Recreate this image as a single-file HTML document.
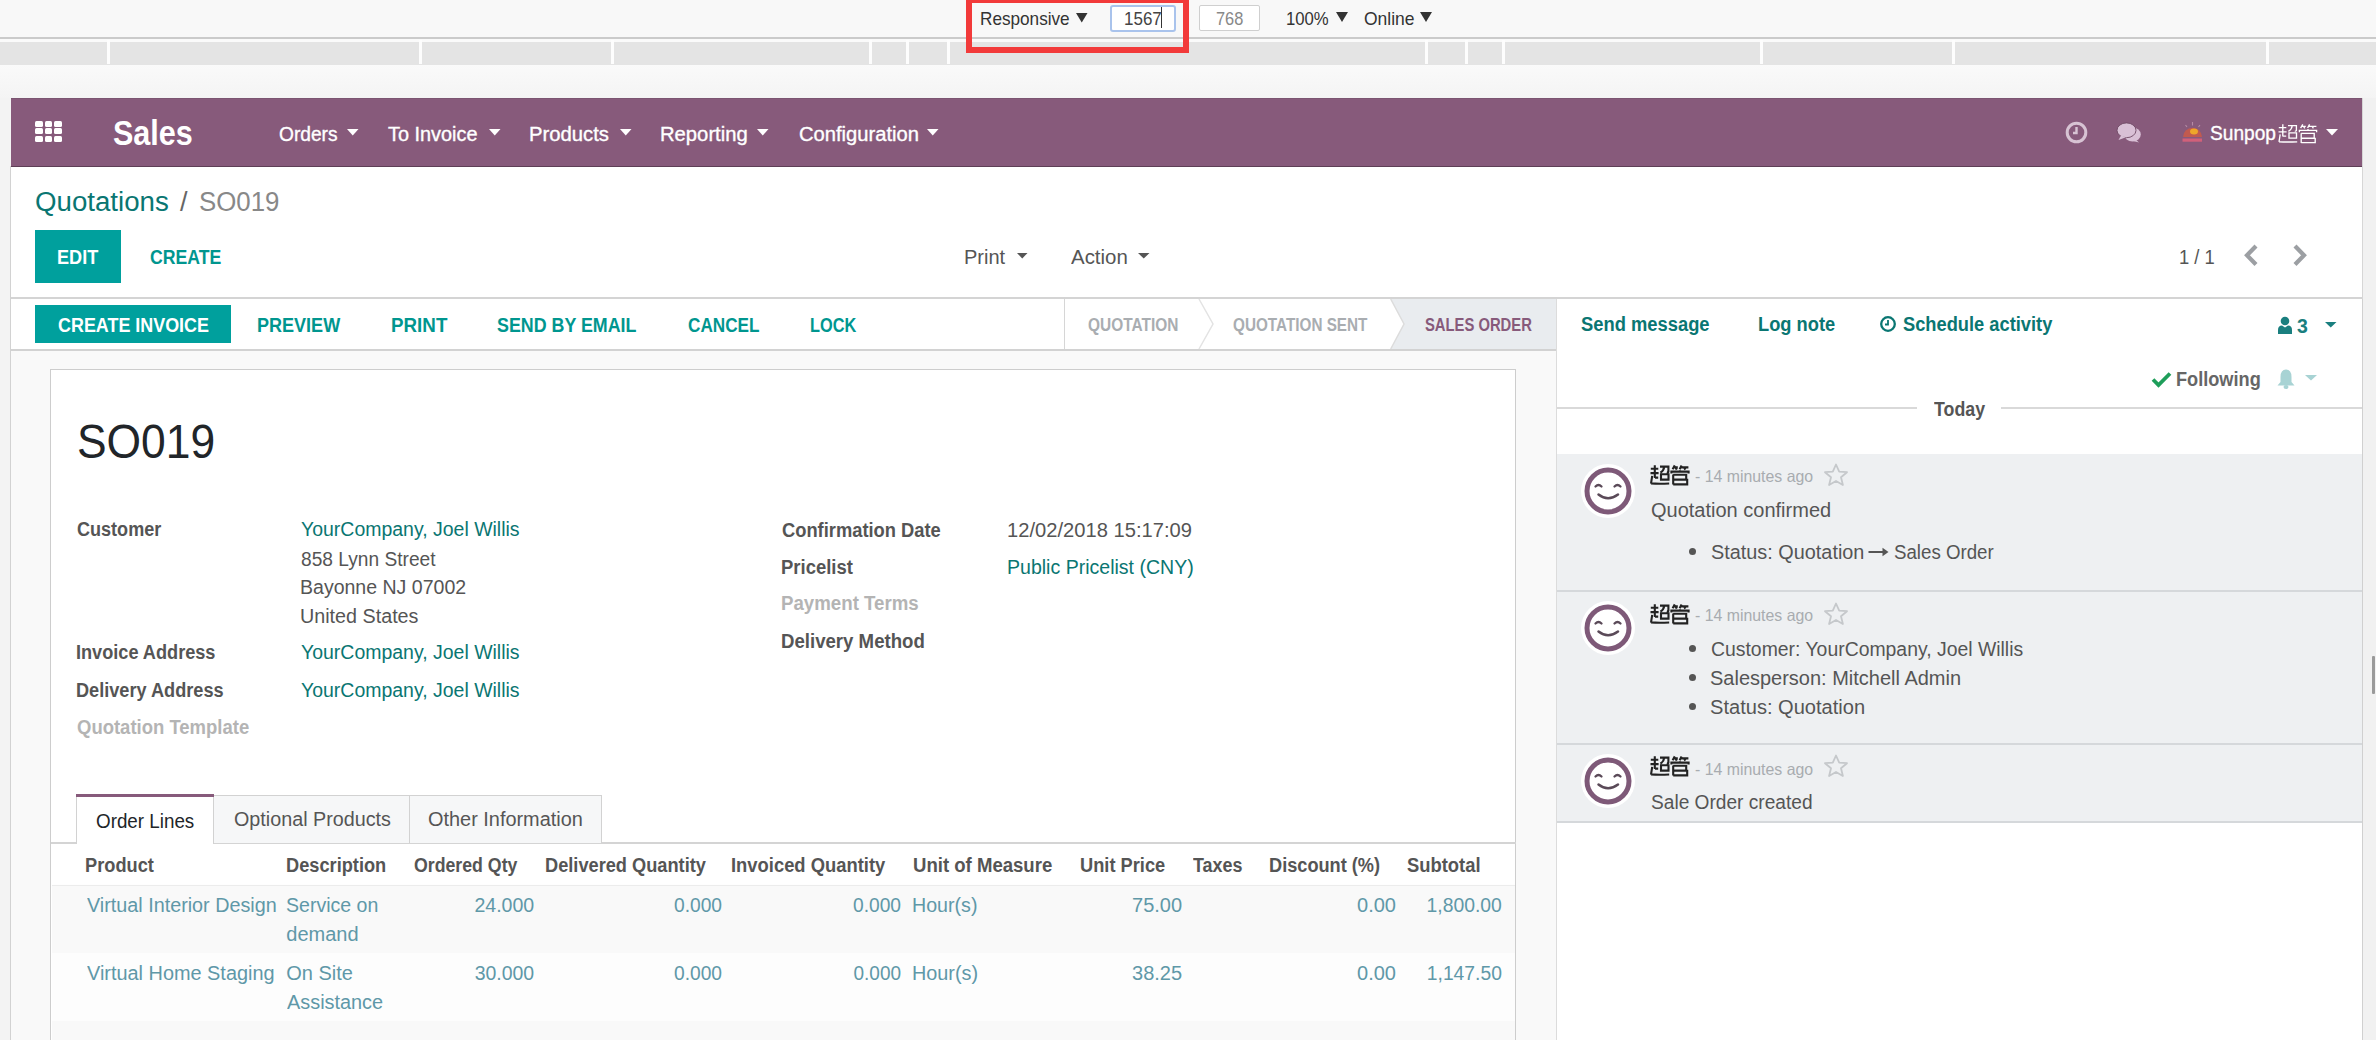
<!DOCTYPE html>
<html><head><meta charset="utf-8"><style>
html,body{margin:0;padding:0;width:2376px;height:1040px;overflow:hidden;background:#fff;}
.a{position:absolute;}
.t{font-family:"Liberation Sans",sans-serif;white-space:pre;}
svg{overflow:visible}
</style></head><body>
<div class="a" style="left:0px;top:0px;width:2376px;height:37px;background:#f8f8f8;"></div>
<div class="a" style="left:0px;top:37px;width:2376px;height:2px;background:#cbcbcb;"></div>
<div class="a" style="left:0px;top:39px;width:2376px;height:3px;background:#fafafa;"></div>
<div class="a" style="left:0px;top:42px;width:2376px;height:23px;background:#e4e4e4;"></div>
<div class="a" style="left:106.5px;top:40px;width:3.0px;height:24px;background:#fdfdfd;"></div>
<div class="a" style="left:418.5px;top:40px;width:3.0px;height:24px;background:#fdfdfd;"></div>
<div class="a" style="left:610.5px;top:40px;width:3.0px;height:24px;background:#fdfdfd;"></div>
<div class="a" style="left:868.5px;top:40px;width:3.0px;height:24px;background:#fdfdfd;"></div>
<div class="a" style="left:905.5px;top:40px;width:3.0px;height:24px;background:#fdfdfd;"></div>
<div class="a" style="left:946.5px;top:40px;width:3.0px;height:24px;background:#fdfdfd;"></div>
<div class="a" style="left:1424.5px;top:40px;width:3.0px;height:24px;background:#fdfdfd;"></div>
<div class="a" style="left:1464.5px;top:40px;width:3.0px;height:24px;background:#fdfdfd;"></div>
<div class="a" style="left:1502.0px;top:40px;width:3.0px;height:24px;background:#fdfdfd;"></div>
<div class="a" style="left:1760.0px;top:40px;width:3.0px;height:24px;background:#fdfdfd;"></div>
<div class="a" style="left:1952.0px;top:40px;width:3.0px;height:24px;background:#fdfdfd;"></div>
<div class="a" style="left:2265.5px;top:40px;width:3.0px;height:24px;background:#fdfdfd;"></div>
<div class="a" style="left:0px;top:65px;width:2376px;height:33px;background:linear-gradient(#fafafa,#f4f4f4);"></div>
<div class="a" style="left:0px;top:98px;width:11px;height:942px;background:#f3f3f3;"></div>
<div class="a" style="left:2362px;top:98px;width:14px;height:942px;background:#f1f1f1;"></div>
<div class="a" style="left:2362px;top:98px;width:1px;height:942px;background:#d6d6d6;"></div>
<div class="a" style="left:2372px;top:656px;width:3px;height:38px;background:#9a9a9a;border-radius:1px"></div>
<div class="a" style="left:11px;top:166px;width:2351px;height:874px;background:#ffffff;"></div>
<div class="a" style="left:10px;top:166px;width:1px;height:874px;background:#d2d2d2;"></div>
<div class="a" style="left:11px;top:98px;width:2351px;height:69px;background:#875a7b;"></div>
<div class="a" style="left:11px;top:98px;width:2351px;height:1px;background:#7b5571;"></div>
<div class="a" style="left:11px;top:165.5px;width:2351px;height:1.5px;background:#5e3f56;"></div>
<div class="a" style="left:11px;top:297px;width:2351px;height:2px;background:#d4d4d4;"></div>
<div class="a" style="left:11px;top:350px;width:1545px;height:690px;background:#f9f9f9;"></div>
<div class="a" style="left:11px;top:349px;width:1545px;height:2px;background:#d2d2d2;"></div>
<div class="a" style="left:50.2px;top:369px;width:1466.3px;height:671px;background:#ffffff;border:1.5px solid #cdcdcd;border-bottom:none;box-sizing:border-box"></div>
<div class="a" style="left:1556px;top:299px;width:806px;height:741px;background:#ffffff;"></div>
<div class="a" style="left:1556px;top:299px;width:1px;height:741px;background:#dcdcdc;"></div>
<div class="a" style="left:34.9px;top:120.6px;width:7.899999999999999px;height:6.200000000000003px;background:#fff;border-radius:1.5px"></div>
<div class="a" style="left:44.6px;top:120.6px;width:7.699999999999996px;height:6.200000000000003px;background:#fff;border-radius:1.5px"></div>
<div class="a" style="left:54.1px;top:120.6px;width:8.100000000000001px;height:6.200000000000003px;background:#fff;border-radius:1.5px"></div>
<div class="a" style="left:34.9px;top:128.1px;width:7.899999999999999px;height:6.400000000000006px;background:#fff;border-radius:1.5px"></div>
<div class="a" style="left:44.6px;top:128.1px;width:7.699999999999996px;height:6.400000000000006px;background:#fff;border-radius:1.5px"></div>
<div class="a" style="left:54.1px;top:128.1px;width:8.100000000000001px;height:6.400000000000006px;background:#fff;border-radius:1.5px"></div>
<div class="a" style="left:34.9px;top:135.8px;width:7.899999999999999px;height:6.399999999999977px;background:#fff;border-radius:1.5px"></div>
<div class="a" style="left:44.6px;top:135.8px;width:7.699999999999996px;height:6.399999999999977px;background:#fff;border-radius:1.5px"></div>
<div class="a" style="left:54.1px;top:135.8px;width:8.100000000000001px;height:6.399999999999977px;background:#fff;border-radius:1.5px"></div>
<svg class="a" style="left:347px;top:129px" width="11.5" height="6.5" viewBox="0 0 11.5 6.5"><polygon points="0,0 11.5,0 5.75,6.5" fill="#fff"/></svg>
<svg class="a" style="left:489px;top:129px" width="11.5" height="6.5" viewBox="0 0 11.5 6.5"><polygon points="0,0 11.5,0 5.75,6.5" fill="#fff"/></svg>
<svg class="a" style="left:619.5px;top:129px" width="11.5" height="6.5" viewBox="0 0 11.5 6.5"><polygon points="0,0 11.5,0 5.75,6.5" fill="#fff"/></svg>
<svg class="a" style="left:756.5px;top:129px" width="11.5" height="6.5" viewBox="0 0 11.5 6.5"><polygon points="0,0 11.5,0 5.75,6.5" fill="#fff"/></svg>
<svg class="a" style="left:927px;top:129px" width="11.5" height="6.5" viewBox="0 0 11.5 6.5"><polygon points="0,0 11.5,0 5.75,6.5" fill="#fff"/></svg>
<svg class="a" style="left:2326px;top:129px" width="12" height="6.5" viewBox="0 0 12 6.5"><polygon points="0,0 12,0 6.0,6.5" fill="#fff"/></svg>
<svg class="a" style="left:2064px;top:120px" width="26" height="26" viewBox="0 0 26 26"><circle cx="12.5" cy="12.5" r="9.3" fill="none" stroke="#d7c3d3" stroke-width="3"/><path d="M12.5 7 V13 H9" fill="none" stroke="#d7c3d3" stroke-width="2.4"/></svg>
<svg class="a" style="left:2110px;top:115px" width="40" height="35" viewBox="0 0 40 35"><ellipse cx="22.5" cy="19.5" rx="8.3" ry="7" fill="#d9c0d6"/><path d="M25 24 L29 27.5 L21 25.5Z" fill="#d9c0d6"/><ellipse cx="16.5" cy="15.3" rx="9.5" ry="7.4" fill="#d9c0d6" stroke="#6e4a64" stroke-width="0.9"/><path d="M11 20.5 L8.5 25 L16 22.3Z" fill="#d9c0d6"/></svg>
<svg class="a" style="left:2180px;top:120px" width="25" height="24" viewBox="0 0 25 24"><path d="M3 17 A9.5 9.2 0 0 1 22 17Z" fill="#c85a4a" opacity="0.9"/><ellipse cx="14" cy="11.5" rx="4" ry="3" fill="#eea62a"/><rect x="2.5" y="18.5" width="19.5" height="3.2" fill="#d9607a" opacity="0.9"/><path d="M12.5 2 V5.5 M5.5 5 L7 7 M20 5 L18.5 7" stroke="#c9a0b8" stroke-width="1.1" opacity="0.7"/></svg>
<svg class="a" style="left:2277.8px;top:123.5px" width="39" height="19.3" viewBox="0 0 39 20" preserveAspectRatio="none"><path d="M0.8 3.7 H8.3 M4.8 0.2 V8.3 M0.5 8.1 H8.6 M4.8 8.3 V13 M5 12.6 H8.2 M2.2 10.8 L1 18.6 M1 18.4 Q8 18.9 19.2 18.5 M10 1.6 H18.4 V6.6 Q18.3 7.6 16.8 7.3 M14.2 1.8 Q13.8 5.6 10.4 7.6 M11 9.2 H18.5 V14.6 H11Z M22.6 4.2 L24.8 0.4 M23.6 2.4 H27.8 M25.6 2.6 L26.8 4.6 M31.6 0.4 L29.6 4.2 M30.6 2.4 H38.4 M34.2 2.6 L35.4 4.6 M21.4 8.6 V6.6 H38.6 V8.6 M30 5.2 V6.6 M23.2 9.6 V19.6 M23.2 9.8 H36.2 V14.6 H23.2 M23.2 14.8 H37.2 V19.4 H23.2" fill="none" stroke="#fff" stroke-width="1.35"/></svg>
<svg class="a" style="left:1016.5px;top:253px" width="10.5" height="5.5" viewBox="0 0 10.5 5.5"><polygon points="0,0 10.5,0 5.25,5.5" fill="#555"/></svg>
<svg class="a" style="left:1137.5px;top:253px" width="11.5" height="5.5" viewBox="0 0 11.5 5.5"><polygon points="0,0 11.5,0 5.75,5.5" fill="#555"/></svg>
<svg class="a" style="left:2240px;top:240px" width="72" height="30" viewBox="0 0 72 30"><path d="M16 6 L7 15.3 L16 24.5" fill="none" stroke="#9c9fa3" stroke-width="4.2"/><path d="M55 6 L64 15.3 L55 24.5" fill="none" stroke="#9c9fa3" stroke-width="4.2"/></svg>
<div class="a" style="left:35px;top:230px;width:86px;height:53px;background:#00a09d;"></div>
<div class="a" style="left:35px;top:305px;width:196px;height:38px;background:#00a09d;"></div>
<div class="a" style="left:1063.5px;top:299px;width:1.0px;height:50px;background:#d6d6d6;"></div>
<svg class="a" style="left:1190px;top:299px" width="366" height="50" viewBox="0 0 366 50"><path d="M200.7 0 L214 25 L200.7 50 H366 V0Z" fill="#e9ecef"/><path d="M9 0 L23 25 L9 50" fill="none" stroke="#e3e3e3" stroke-width="1.5"/><path d="M200.7 0 L214 25 L200.7 50" fill="none" stroke="#dcdcdc" stroke-width="1.5"/></svg>
<div class="a" style="left:1110px;top:5px;width:66px;height:27px;background:#fff;border:2px solid #a9c3ec;border-radius:3px;box-sizing:border-box"></div>
<div class="a" style="left:1161px;top:7px;width:1.2999999999999545px;height:21px;background:#333;"></div>
<div class="a" style="left:1199px;top:5px;width:61px;height:25.5px;background:#fff;border:1.5px solid #cfcfcf;border-radius:2px;box-sizing:border-box"></div>
<svg class="a" style="left:1076px;top:12.5px" width="11.5" height="9.5" viewBox="0 0 11.5 9.5"><polygon points="0,0 11.5,0 5.75,9.5" fill="#333"/></svg>
<svg class="a" style="left:1336px;top:12px" width="12" height="10" viewBox="0 0 12 10"><polygon points="0,0 12,0 6.0,10" fill="#333"/></svg>
<svg class="a" style="left:1420px;top:12px" width="12" height="10" viewBox="0 0 12 10"><polygon points="0,0 12,0 6.0,10" fill="#333"/></svg>
<div class="a" style="left:1183px;top:20px;width:6px;height:8px;background:#555;"></div>
<div class="a" style="left:966px;top:-3px;width:223px;height:55.6px;background:transparent;border:6.2px solid #f23a3a;box-sizing:border-box"></div>
<div class="a" style="left:51px;top:842px;width:1465px;height:1.5px;background:#d4d4d4;"></div>
<div class="a" style="left:213px;top:795px;width:389px;height:48px;background:#f6f7f8;border:1.5px solid #d2d2d2;border-bottom:none;box-sizing:border-box"></div>
<div class="a" style="left:408.5px;top:795px;width:1.5px;height:48px;background:#d2d2d2;"></div>
<div class="a" style="left:76px;top:794px;width:138px;height:49.5px;background:#fff;border-left:1.5px solid #d2d2d2;border-right:1.5px solid #d2d2d2;box-sizing:border-box"></div>
<div class="a" style="left:76px;top:794px;width:138px;height:3px;background:#875a7b;"></div>
<div class="a" style="left:52px;top:884.5px;width:1463px;height:1.5px;background:#ececec;box-shadow:0 1px 3px rgba(0,0,0,0.07)"></div>
<div class="a" style="left:52px;top:886px;width:1463px;height:66.5px;background:#f9f9f9;"></div>
<div class="a" style="left:52px;top:952.5px;width:1463px;height:68.5px;background:#fdfdfd;"></div>
<div class="a" style="left:52px;top:1021px;width:1463px;height:19px;background:#f9f9f9;"></div>
<svg class="a" style="left:1878px;top:314px" width="20" height="20" viewBox="0 0 20 20"><circle cx="10" cy="10" r="6.8" fill="none" stroke="#0a7672" stroke-width="2.3"/><path d="M10 6 V10.5 H7" fill="none" stroke="#0a7672" stroke-width="1.8"/></svg>
<svg class="a" style="left:2277px;top:316px" width="16" height="19" viewBox="0 0 16 19"><circle cx="8" cy="5" r="4.3" fill="#1a7f7f"/><path d="M1 18 V14 Q1 9.5 5 9.5 L8 11.5 L11 9.5 Q15 9.5 15 14 V18Z" fill="#1a7f7f"/></svg>
<svg class="a" style="left:2325px;top:322px" width="11.5" height="5.5" viewBox="0 0 11.5 5.5"><polygon points="0,0 11.5,0 5.75,5.5" fill="#1a7f7f"/></svg>
<svg class="a" style="left:2151px;top:371px" width="21" height="17" viewBox="0 0 21 17"><path d="M2 8.5 L7.5 14 L19 2.5" fill="none" stroke="#1e9e5a" stroke-width="3.8"/></svg>
<svg class="a" style="left:2276px;top:368px" width="20" height="22" viewBox="0 0 20 22"><path d="M10 1.5 Q15.5 1.5 15.5 9 V14 L18.5 17.5 H1.5 L4.5 14 V9 Q4.5 1.5 10 1.5Z" fill="#a8d3d4"/><ellipse cx="10" cy="19" rx="2.5" ry="2" fill="#a8d3d4"/></svg>
<svg class="a" style="left:2305px;top:375px" width="12" height="5.5" viewBox="0 0 12 5.5"><polygon points="0,0 12,0 6.0,5.5" fill="#a8d3d4"/></svg>
<div class="a" style="left:1557px;top:407px;width:360px;height:1.6999999999999886px;background:#d9d9d9;"></div>
<div class="a" style="left:2001px;top:407px;width:361px;height:1.6999999999999886px;background:#d9d9d9;"></div>
<div class="a" style="left:1557px;top:454px;width:805px;height:136px;background:#eef0f2;"></div>
<div class="a" style="left:1557px;top:590px;width:805px;height:2px;background:#d5d8db;"></div>
<div class="a" style="left:1557px;top:592px;width:805px;height:151px;background:#eef0f2;"></div>
<div class="a" style="left:1557px;top:743px;width:805px;height:2px;background:#d5d8db;"></div>
<div class="a" style="left:1557px;top:745px;width:805px;height:76px;background:#eef0f2;"></div>
<div class="a" style="left:1557px;top:821px;width:805px;height:2px;background:#d5d8db;"></div>
<div class="a" style="left:2362px;top:299px;width:1px;height:741px;background:#d0d0d0;"></div>
<svg class="a" style="left:1579.7px;top:462.5px" width="56" height="56" viewBox="0 0 56 56"><circle cx="28" cy="28" r="27" fill="#fff"/><circle cx="28" cy="28" r="21" fill="none" stroke="#7e5978" stroke-width="5"/><path d="M15.5 23.5 Q18.5 20.5 21.5 23.5 M34.5 23.5 Q37.5 20.5 40.5 23.5" fill="none" stroke="#5a4a58" stroke-width="2.3" stroke-linecap="round"/><path d="M18.5 31.5 Q28 39 38 31.5" fill="none" stroke="#5a4a58" stroke-width="2.5" stroke-linecap="round"/></svg>
<svg class="a" style="left:1650px;top:465px" width="39" height="20" viewBox="0 0 39 20" preserveAspectRatio="none"><path d="M0.8 3.7 H8.3 M4.8 0.2 V8.3 M0.5 8.1 H8.6 M4.8 8.3 V13 M5 12.6 H8.2 M2.2 10.8 L1 18.6 M1 18.4 Q8 18.9 19.2 18.5 M10 1.6 H18.4 V6.6 Q18.3 7.6 16.8 7.3 M14.2 1.8 Q13.8 5.6 10.4 7.6 M11 9.2 H18.5 V14.6 H11Z M22.6 4.2 L24.8 0.4 M23.6 2.4 H27.8 M25.6 2.6 L26.8 4.6 M31.6 0.4 L29.6 4.2 M30.6 2.4 H38.4 M34.2 2.6 L35.4 4.6 M21.4 8.6 V6.6 H38.6 V8.6 M30 5.2 V6.6 M23.2 9.6 V19.6 M23.2 9.8 H36.2 V14.6 H23.2 M23.2 14.8 H37.2 V19.4 H23.2" fill="none" stroke="#222" stroke-width="2.1"/></svg>
<svg class="a" style="left:1823px;top:463px" width="26" height="24" viewBox="0 0 26 24"><path d="M13 1.5 L16.2 8.6 L24 9.2 L18 14.3 L19.9 22 L13 17.9 L6.1 22 L8 14.3 L2 9.2 L9.8 8.6Z" fill="none" stroke="#c5c8cb" stroke-width="1.8" stroke-linejoin="round"/></svg>
<svg class="a" style="left:1579.7px;top:600.2px" width="56" height="56" viewBox="0 0 56 56"><circle cx="28" cy="28" r="27" fill="#fff"/><circle cx="28" cy="28" r="21" fill="none" stroke="#7e5978" stroke-width="5"/><path d="M15.5 23.5 Q18.5 20.5 21.5 23.5 M34.5 23.5 Q37.5 20.5 40.5 23.5" fill="none" stroke="#5a4a58" stroke-width="2.3" stroke-linecap="round"/><path d="M18.5 31.5 Q28 39 38 31.5" fill="none" stroke="#5a4a58" stroke-width="2.5" stroke-linecap="round"/></svg>
<svg class="a" style="left:1650px;top:603.5px" width="39" height="20" viewBox="0 0 39 20" preserveAspectRatio="none"><path d="M0.8 3.7 H8.3 M4.8 0.2 V8.3 M0.5 8.1 H8.6 M4.8 8.3 V13 M5 12.6 H8.2 M2.2 10.8 L1 18.6 M1 18.4 Q8 18.9 19.2 18.5 M10 1.6 H18.4 V6.6 Q18.3 7.6 16.8 7.3 M14.2 1.8 Q13.8 5.6 10.4 7.6 M11 9.2 H18.5 V14.6 H11Z M22.6 4.2 L24.8 0.4 M23.6 2.4 H27.8 M25.6 2.6 L26.8 4.6 M31.6 0.4 L29.6 4.2 M30.6 2.4 H38.4 M34.2 2.6 L35.4 4.6 M21.4 8.6 V6.6 H38.6 V8.6 M30 5.2 V6.6 M23.2 9.6 V19.6 M23.2 9.8 H36.2 V14.6 H23.2 M23.2 14.8 H37.2 V19.4 H23.2" fill="none" stroke="#222" stroke-width="2.1"/></svg>
<svg class="a" style="left:1823px;top:601.5px" width="26" height="24" viewBox="0 0 26 24"><path d="M13 1.5 L16.2 8.6 L24 9.2 L18 14.3 L19.9 22 L13 17.9 L6.1 22 L8 14.3 L2 9.2 L9.8 8.6Z" fill="none" stroke="#c5c8cb" stroke-width="1.8" stroke-linejoin="round"/></svg>
<svg class="a" style="left:1579.7px;top:752.5px" width="56" height="56" viewBox="0 0 56 56"><circle cx="28" cy="28" r="27" fill="#fff"/><circle cx="28" cy="28" r="21" fill="none" stroke="#7e5978" stroke-width="5"/><path d="M15.5 23.5 Q18.5 20.5 21.5 23.5 M34.5 23.5 Q37.5 20.5 40.5 23.5" fill="none" stroke="#5a4a58" stroke-width="2.3" stroke-linecap="round"/><path d="M18.5 31.5 Q28 39 38 31.5" fill="none" stroke="#5a4a58" stroke-width="2.5" stroke-linecap="round"/></svg>
<svg class="a" style="left:1650px;top:756px" width="39" height="20" viewBox="0 0 39 20" preserveAspectRatio="none"><path d="M0.8 3.7 H8.3 M4.8 0.2 V8.3 M0.5 8.1 H8.6 M4.8 8.3 V13 M5 12.6 H8.2 M2.2 10.8 L1 18.6 M1 18.4 Q8 18.9 19.2 18.5 M10 1.6 H18.4 V6.6 Q18.3 7.6 16.8 7.3 M14.2 1.8 Q13.8 5.6 10.4 7.6 M11 9.2 H18.5 V14.6 H11Z M22.6 4.2 L24.8 0.4 M23.6 2.4 H27.8 M25.6 2.6 L26.8 4.6 M31.6 0.4 L29.6 4.2 M30.6 2.4 H38.4 M34.2 2.6 L35.4 4.6 M21.4 8.6 V6.6 H38.6 V8.6 M30 5.2 V6.6 M23.2 9.6 V19.6 M23.2 9.8 H36.2 V14.6 H23.2 M23.2 14.8 H37.2 V19.4 H23.2" fill="none" stroke="#222" stroke-width="2.1"/></svg>
<svg class="a" style="left:1823px;top:754px" width="26" height="24" viewBox="0 0 26 24"><path d="M13 1.5 L16.2 8.6 L24 9.2 L18 14.3 L19.9 22 L13 17.9 L6.1 22 L8 14.3 L2 9.2 L9.8 8.6Z" fill="none" stroke="#c5c8cb" stroke-width="1.8" stroke-linejoin="round"/></svg>
<div class="a" style="left:1689px;top:548.3px;width:7px;height:7px;border-radius:50%;background:#555"></div>
<div class="a" style="left:1689px;top:645.1px;width:7px;height:7px;border-radius:50%;background:#555"></div>
<div class="a" style="left:1689px;top:674.3px;width:7px;height:7px;border-radius:50%;background:#555"></div>
<div class="a" style="left:1689px;top:703.2px;width:7px;height:7px;border-radius:50%;background:#555"></div>
<svg class="a" style="left:1868px;top:546px" width="22" height="12" viewBox="0 0 22 12"><path d="M0.5 6 H18" stroke="#555" stroke-width="2"/><path d="M14.5 1.8 L20.5 6 L14.5 10.2Z" fill="#555"/></svg>
<div id="dt_resp" class="a t" style="top:9.64px;font-size:18.5px;line-height:18.5px;font-weight:normal;color:#333;transform:scaleX(0.9273);left:979.50px;transform-origin:0 0">Responsive</div>
<div id="dt_1567" class="a t" style="top:9.64px;font-size:18.5px;line-height:18.5px;font-weight:normal;color:#444;transform:scaleX(0.9190);left:1124.10px;transform-origin:0 0">1567</div>
<div id="dt_768" class="a t" style="top:9.64px;font-size:18.5px;line-height:18.5px;font-weight:normal;color:#888;transform:scaleX(0.8852);left:1216.00px;transform-origin:0 0">768</div>
<div id="dt_100" class="a t" style="top:9.64px;font-size:18.5px;line-height:18.5px;font-weight:normal;color:#333;transform:scaleX(0.9025);left:1286.40px;transform-origin:0 0">100%</div>
<div id="dt_online" class="a t" style="top:9.64px;font-size:18.5px;line-height:18.5px;font-weight:normal;color:#333;transform:scaleX(0.9440);left:1363.50px;transform-origin:0 0">Online</div>
<div id="nv_sales" class="a t" style="top:116.10px;font-size:34.5px;line-height:34.5px;font-weight:bold;color:#fff;transform:scaleX(0.8854);left:112.50px;transform-origin:0 0">Sales</div>
<div id="nv_orders" class="a t" style="top:123.77px;font-size:20px;line-height:20px;font-weight:normal;color:#fff;transform:scaleX(0.9576);-webkit-text-stroke:0.35px #fff;left:279.00px;transform-origin:0 0">Orders</div>
<div id="nv_toinv" class="a t" style="top:123.77px;font-size:20px;line-height:20px;font-weight:normal;color:#fff;transform:scaleX(0.9937);-webkit-text-stroke:0.35px #fff;left:388.40px;transform-origin:0 0">To Invoice</div>
<div id="nv_products" class="a t" style="top:123.77px;font-size:20px;line-height:20px;font-weight:normal;color:#fff;transform:scaleX(1.0131);-webkit-text-stroke:0.35px #fff;left:529.00px;transform-origin:0 0">Products</div>
<div id="nv_reporting" class="a t" style="top:123.77px;font-size:20px;line-height:20px;font-weight:normal;color:#fff;transform:scaleX(1.0118);-webkit-text-stroke:0.35px #fff;left:660.10px;transform-origin:0 0">Reporting</div>
<div id="nv_config" class="a t" style="top:123.77px;font-size:20px;line-height:20px;font-weight:normal;color:#fff;transform:scaleX(1.0085);-webkit-text-stroke:0.35px #fff;left:798.80px;transform-origin:0 0">Configuration</div>
<div id="nv_user" class="a t" style="top:122.87px;font-size:20px;line-height:20px;font-weight:normal;color:#fff;transform:scaleX(0.9565);-webkit-text-stroke:0.35px #fff;left:2210.20px;transform-origin:0 0">Sunpop</div>
<div id="cp_quot" class="a t" style="top:189.44px;font-size:27px;line-height:27px;font-weight:normal;color:#0a7672;transform:scaleX(1.0247);left:34.80px;transform-origin:0 0">Quotations</div>
<div id="cp_slash" class="a t" style="top:189.44px;font-size:27px;line-height:27px;font-weight:normal;color:#666;transform:scaleX(1.0000);left:180.00px;transform-origin:0 0">/</div>
<div id="cp_so" class="a t" style="top:189.44px;font-size:27px;line-height:27px;font-weight:normal;color:#888;transform:scaleX(0.9563);left:199.10px;transform-origin:0 0">SO019</div>
<div id="cp_edit" class="a t" style="top:248.29px;font-size:19.5px;line-height:19.5px;font-weight:bold;color:#fff;transform:scaleX(0.9280);left:57.00px;transform-origin:0 0">EDIT</div>
<div id="cp_create" class="a t" style="top:248.29px;font-size:19.5px;line-height:19.5px;font-weight:bold;color:#00968f;transform:scaleX(0.9065);left:150.00px;transform-origin:0 0">CREATE</div>
<div id="cp_print" class="a t" style="top:247.37px;font-size:20px;line-height:20px;font-weight:normal;color:#555555;transform:scaleX(1.0009);left:964.10px;transform-origin:0 0">Print</div>
<div id="cp_action" class="a t" style="top:247.37px;font-size:20px;line-height:20px;font-weight:normal;color:#555555;transform:scaleX(1.0220);left:1070.90px;transform-origin:0 0">Action</div>
<div id="cp_pager" class="a t" style="top:247.37px;font-size:20px;line-height:20px;font-weight:normal;color:#555555;transform:scaleX(0.9211);left:2178.50px;transform-origin:0 0">1 / 1</div>
<div id="sb_inv" class="a t" style="top:316.29px;font-size:19.5px;line-height:19.5px;font-weight:bold;color:#fff;transform:scaleX(0.9188);left:57.60px;transform-origin:0 0">CREATE INVOICE</div>
<div id="sb_prev" class="a t" style="top:316.29px;font-size:19.5px;line-height:19.5px;font-weight:bold;color:#00968f;transform:scaleX(0.9247);left:257.20px;transform-origin:0 0">PREVIEW</div>
<div id="sb_print" class="a t" style="top:316.29px;font-size:19.5px;line-height:19.5px;font-weight:bold;color:#00968f;transform:scaleX(0.9634);left:390.80px;transform-origin:0 0">PRINT</div>
<div id="sb_send" class="a t" style="top:316.29px;font-size:19.5px;line-height:19.5px;font-weight:bold;color:#00968f;transform:scaleX(0.9150);left:497.00px;transform-origin:0 0">SEND BY EMAIL</div>
<div id="sb_cancel" class="a t" style="top:316.29px;font-size:19.5px;line-height:19.5px;font-weight:bold;color:#00968f;transform:scaleX(0.8792);left:688.10px;transform-origin:0 0">CANCEL</div>
<div id="sb_lock" class="a t" style="top:316.29px;font-size:19.5px;line-height:19.5px;font-weight:bold;color:#00968f;transform:scaleX(0.8367);left:810.00px;transform-origin:0 0">LOCK</div>
<div id="st_quot" class="a t" style="top:316.06px;font-size:18px;line-height:18px;font-weight:bold;color:#a9adb1;transform:scaleX(0.8578);left:1088.10px;transform-origin:0 0">QUOTATION</div>
<div id="st_sent" class="a t" style="top:316.06px;font-size:18px;line-height:18px;font-weight:bold;color:#a9adb1;transform:scaleX(0.8491);left:1233.00px;transform-origin:0 0">QUOTATION SENT</div>
<div id="st_so" class="a t" style="top:316.06px;font-size:18px;line-height:18px;font-weight:bold;color:#875a7b;transform:scaleX(0.8218);left:1424.50px;transform-origin:0 0">SALES ORDER</div>
<div id="sh_title" class="a t" style="top:418.17px;font-size:48px;line-height:48px;font-weight:normal;color:#212529;transform:scaleX(0.9245);left:76.80px;transform-origin:0 0">SO019</div>
<div id="f_cust" class="a t" style="top:519.99px;font-size:19.5px;line-height:19.5px;font-weight:bold;color:#555555;transform:scaleX(0.9255);left:76.60px;transform-origin:0 0">Customer</div>
<div id="f_cust_v" class="a t" style="top:519.07px;font-size:20px;line-height:20px;font-weight:normal;color:#0a7672;transform:scaleX(0.9734);left:301.30px;transform-origin:0 0">YourCompany, Joel Willis</div>
<div id="f_addr1" class="a t" style="top:548.87px;font-size:20px;line-height:20px;font-weight:normal;color:#555555;transform:scaleX(0.9575);left:301.30px;transform-origin:0 0">858 Lynn Street</div>
<div id="f_addr2" class="a t" style="top:577.17px;font-size:20px;line-height:20px;font-weight:normal;color:#555555;transform:scaleX(0.9764);left:300.30px;transform-origin:0 0">Bayonne NJ 07002</div>
<div id="f_addr3" class="a t" style="top:606.07px;font-size:20px;line-height:20px;font-weight:normal;color:#555555;transform:scaleX(0.9866);left:300.30px;transform-origin:0 0">United States</div>
<div id="f_inv" class="a t" style="top:643.39px;font-size:19.5px;line-height:19.5px;font-weight:bold;color:#555555;transform:scaleX(0.9302);left:75.60px;transform-origin:0 0">Invoice Address</div>
<div id="f_inv_v" class="a t" style="top:642.47px;font-size:20px;line-height:20px;font-weight:normal;color:#0a7672;transform:scaleX(0.9734);left:301.30px;transform-origin:0 0">YourCompany, Joel Willis</div>
<div id="f_del" class="a t" style="top:680.79px;font-size:19.5px;line-height:19.5px;font-weight:bold;color:#555555;transform:scaleX(0.9304);left:75.60px;transform-origin:0 0">Delivery Address</div>
<div id="f_del_v" class="a t" style="top:679.87px;font-size:20px;line-height:20px;font-weight:normal;color:#0a7672;transform:scaleX(0.9734);left:301.30px;transform-origin:0 0">YourCompany, Joel Willis</div>
<div id="f_tmpl" class="a t" style="top:717.69px;font-size:19.5px;line-height:19.5px;font-weight:bold;color:#b4b4b4;transform:scaleX(0.9481);left:76.60px;transform-origin:0 0">Quotation Template</div>
<div id="f_conf" class="a t" style="top:520.89px;font-size:19.5px;line-height:19.5px;font-weight:bold;color:#555555;transform:scaleX(0.9397);left:782.40px;transform-origin:0 0">Confirmation Date</div>
<div id="f_conf_v" class="a t" style="top:519.97px;font-size:20px;line-height:20px;font-weight:normal;color:#555555;transform:scaleX(1.0077);left:1007.00px;transform-origin:0 0">12/02/2018 15:17:09</div>
<div id="f_pl" class="a t" style="top:557.59px;font-size:19.5px;line-height:19.5px;font-weight:bold;color:#555555;transform:scaleX(0.9476);left:781.40px;transform-origin:0 0">Pricelist</div>
<div id="f_pl_v" class="a t" style="top:556.67px;font-size:20px;line-height:20px;font-weight:normal;color:#0a7672;transform:scaleX(0.9769);left:1007.00px;transform-origin:0 0">Public Pricelist (CNY)</div>
<div id="f_pt" class="a t" style="top:593.99px;font-size:19.5px;line-height:19.5px;font-weight:bold;color:#b4b4b4;transform:scaleX(0.9577);left:781.40px;transform-origin:0 0">Payment Terms</div>
<div id="f_dm" class="a t" style="top:631.89px;font-size:19.5px;line-height:19.5px;font-weight:bold;color:#555555;transform:scaleX(0.9547);left:781.40px;transform-origin:0 0">Delivery Method</div>
<div id="tab1" class="a t" style="top:810.87px;font-size:20px;line-height:20px;font-weight:normal;color:#212529;transform:scaleX(0.9405);left:95.80px;transform-origin:0 0">Order Lines</div>
<div id="tab2" class="a t" style="top:809.37px;font-size:20px;line-height:20px;font-weight:normal;color:#555;transform:scaleX(0.9874);left:233.60px;transform-origin:0 0">Optional Products</div>
<div id="tab3" class="a t" style="top:809.37px;font-size:20px;line-height:20px;font-weight:normal;color:#555;transform:scaleX(0.9949);left:428.20px;transform-origin:0 0">Other Information</div>
<div id="th_prod" class="a t" style="top:856.49px;font-size:19.5px;line-height:19.5px;font-weight:bold;color:#555555;transform:scaleX(0.9345);left:85.00px;transform-origin:0 0">Product</div>
<div id="th_desc" class="a t" style="top:856.49px;font-size:19.5px;line-height:19.5px;font-weight:bold;color:#555555;transform:scaleX(0.9340);left:286.00px;transform-origin:0 0">Description</div>
<div id="th_oq" class="a t" style="top:856.49px;font-size:19.5px;line-height:19.5px;font-weight:bold;color:#555555;transform:scaleX(0.9089);left:413.70px;transform-origin:0 0">Ordered Qty</div>
<div id="th_dq" class="a t" style="top:856.49px;font-size:19.5px;line-height:19.5px;font-weight:bold;color:#555555;transform:scaleX(0.9338);left:544.60px;transform-origin:0 0">Delivered Quantity</div>
<div id="th_iq" class="a t" style="top:856.49px;font-size:19.5px;line-height:19.5px;font-weight:bold;color:#555555;transform:scaleX(0.9428);left:731.40px;transform-origin:0 0">Invoiced Quantity</div>
<div id="th_uom" class="a t" style="top:856.49px;font-size:19.5px;line-height:19.5px;font-weight:bold;color:#555555;transform:scaleX(0.9521);left:913.00px;transform-origin:0 0">Unit of Measure</div>
<div id="th_up" class="a t" style="top:856.49px;font-size:19.5px;line-height:19.5px;font-weight:bold;color:#555555;transform:scaleX(0.9360);left:1079.90px;transform-origin:0 0">Unit Price</div>
<div id="th_tax" class="a t" style="top:856.49px;font-size:19.5px;line-height:19.5px;font-weight:bold;color:#555555;transform:scaleX(0.9189);left:1193.00px;transform-origin:0 0">Taxes</div>
<div id="th_disc" class="a t" style="top:856.49px;font-size:19.5px;line-height:19.5px;font-weight:bold;color:#555555;transform:scaleX(0.9322);left:1268.70px;transform-origin:0 0">Discount (%)</div>
<div id="th_sub" class="a t" style="top:856.49px;font-size:19.5px;line-height:19.5px;font-weight:bold;color:#555555;transform:scaleX(0.9431);left:1407.00px;transform-origin:0 0">Subtotal</div>
<div id="r1_prod" class="a t" style="top:895.47px;font-size:20px;line-height:20px;font-weight:normal;color:#5f98a8;transform:scaleX(0.9885);left:86.60px;transform-origin:0 0">Virtual Interior Design</div>
<div id="r1_desc1" class="a t" style="top:895.47px;font-size:20px;line-height:20px;font-weight:normal;color:#5f98a8;transform:scaleX(0.9765);left:286.30px;transform-origin:0 0">Service on</div>
<div id="r1_desc2" class="a t" style="top:923.77px;font-size:20px;line-height:20px;font-weight:normal;color:#5f98a8;transform:scaleX(1.0000);left:286.30px;transform-origin:0 0">demand</div>
<div id="r1_oq" class="a t" style="top:895.47px;font-size:20px;line-height:20px;font-weight:normal;color:#5f98a8;transform:scaleX(0.9774);right:1841.60px;transform-origin:100% 0">24.000</div>
<div id="r1_dq" class="a t" style="top:895.47px;font-size:20px;line-height:20px;font-weight:normal;color:#5f98a8;transform:scaleX(0.9600);right:1654.00px;transform-origin:100% 0">0.000</div>
<div id="r1_iq" class="a t" style="top:895.47px;font-size:20px;line-height:20px;font-weight:normal;color:#5f98a8;transform:scaleX(0.9598);right:1475.10px;transform-origin:100% 0">0.000</div>
<div id="r1_uom" class="a t" style="top:895.47px;font-size:20px;line-height:20px;font-weight:normal;color:#5f98a8;transform:scaleX(0.9819);left:911.80px;transform-origin:0 0">Hour(s)</div>
<div id="r1_up" class="a t" style="top:895.47px;font-size:20px;line-height:20px;font-weight:normal;color:#5f98a8;transform:scaleX(1.0000);right:1193.90px;transform-origin:100% 0">75.00</div>
<div id="r1_disc" class="a t" style="top:895.47px;font-size:20px;line-height:20px;font-weight:normal;color:#5f98a8;transform:scaleX(1.0000);right:980.00px;transform-origin:100% 0">0.00</div>
<div id="r1_sub" class="a t" style="top:895.47px;font-size:20px;line-height:20px;font-weight:normal;color:#5f98a8;transform:scaleX(0.9664);right:874.40px;transform-origin:100% 0">1,800.00</div>
<div id="r2_prod" class="a t" style="top:962.77px;font-size:20px;line-height:20px;font-weight:normal;color:#5f98a8;transform:scaleX(0.9943);left:86.60px;transform-origin:0 0">Virtual Home Staging</div>
<div id="r2_desc1" class="a t" style="top:962.77px;font-size:20px;line-height:20px;font-weight:normal;color:#5f98a8;transform:scaleX(1.0000);left:286.30px;transform-origin:0 0">On Site</div>
<div id="r2_desc2" class="a t" style="top:991.67px;font-size:20px;line-height:20px;font-weight:normal;color:#5f98a8;transform:scaleX(0.9939);left:287.30px;transform-origin:0 0">Assistance</div>
<div id="r2_oq" class="a t" style="top:962.77px;font-size:20px;line-height:20px;font-weight:normal;color:#5f98a8;transform:scaleX(0.9724);right:1841.60px;transform-origin:100% 0">30.000</div>
<div id="r2_dq" class="a t" style="top:962.77px;font-size:20px;line-height:20px;font-weight:normal;color:#5f98a8;transform:scaleX(0.9600);right:1654.00px;transform-origin:100% 0">0.000</div>
<div id="r2_iq" class="a t" style="top:962.77px;font-size:20px;line-height:20px;font-weight:normal;color:#5f98a8;transform:scaleX(0.9497);right:1475.10px;transform-origin:100% 0">0.000</div>
<div id="r2_uom" class="a t" style="top:962.77px;font-size:20px;line-height:20px;font-weight:normal;color:#5f98a8;transform:scaleX(0.9911);left:911.80px;transform-origin:0 0">Hour(s)</div>
<div id="r2_up" class="a t" style="top:962.77px;font-size:20px;line-height:20px;font-weight:normal;color:#5f98a8;transform:scaleX(1.0000);right:1193.90px;transform-origin:100% 0">38.25</div>
<div id="r2_disc" class="a t" style="top:962.77px;font-size:20px;line-height:20px;font-weight:normal;color:#5f98a8;transform:scaleX(1.0000);right:980.00px;transform-origin:100% 0">0.00</div>
<div id="r2_sub" class="a t" style="top:962.77px;font-size:20px;line-height:20px;font-weight:normal;color:#5f98a8;transform:scaleX(0.9638);right:874.40px;transform-origin:100% 0">1,147.50</div>
<div id="ch_send" class="a t" style="top:314.99px;font-size:19.5px;line-height:19.5px;font-weight:bold;color:#0a7672;transform:scaleX(0.9413);left:1581.40px;transform-origin:0 0">Send message</div>
<div id="ch_log" class="a t" style="top:314.99px;font-size:19.5px;line-height:19.5px;font-weight:bold;color:#0a7672;transform:scaleX(0.9370);left:1757.50px;transform-origin:0 0">Log note</div>
<div id="ch_sched" class="a t" style="top:314.99px;font-size:19.5px;line-height:19.5px;font-weight:bold;color:#0a7672;transform:scaleX(0.9376);left:1902.60px;transform-origin:0 0">Schedule activity</div>
<div id="ch_3" class="a t" style="top:317.19px;font-size:19.5px;line-height:19.5px;font-weight:bold;color:#1a7f7f;transform:scaleX(1.0000);left:2297.10px;transform-origin:0 0">3</div>
<div id="ch_follow" class="a t" style="top:370.49px;font-size:19.5px;line-height:19.5px;font-weight:bold;color:#666;transform:scaleX(0.9313);left:2175.80px;transform-origin:0 0">Following</div>
<div id="ch_today" class="a t" style="top:400.09px;font-size:19.5px;line-height:19.5px;font-weight:bold;color:#555;transform:scaleX(0.9123);left:1933.50px;transform-origin:0 0">Today</div>
<div id="m1_ago" class="a t" style="top:467.83px;font-size:16.5px;line-height:16.5px;font-weight:normal;color:#a8acb0;transform:scaleX(0.9607);left:1694.50px;transform-origin:0 0">- 14 minutes ago</div>
<div id="m1_body" class="a t" style="top:499.97px;font-size:20px;line-height:20px;font-weight:normal;color:#555;transform:scaleX(1.0002);left:1650.80px;transform-origin:0 0">Quotation confirmed</div>
<div id="m1_li" class="a t" style="top:541.87px;font-size:20px;line-height:20px;font-weight:normal;color:#555;transform:scaleX(0.9925);left:1710.80px;transform-origin:0 0">Status: Quotation</div>
<div id="m1_li2" class="a t" style="top:541.87px;font-size:20px;line-height:20px;font-weight:normal;color:#555;transform:scaleX(0.9346);left:1893.90px;transform-origin:0 0">Sales Order</div>
<div id="m2_ago" class="a t" style="top:606.93px;font-size:16.5px;line-height:16.5px;font-weight:normal;color:#a8acb0;transform:scaleX(0.9607);left:1694.50px;transform-origin:0 0">- 14 minutes ago</div>
<div id="m2_li1" class="a t" style="top:638.67px;font-size:20px;line-height:20px;font-weight:normal;color:#555;transform:scaleX(0.9695);left:1710.80px;transform-origin:0 0">Customer: YourCompany, Joel Willis</div>
<div id="m2_li2" class="a t" style="top:667.87px;font-size:20px;line-height:20px;font-weight:normal;color:#555;transform:scaleX(0.9992);left:1709.80px;transform-origin:0 0">Salesperson: Mitchell Admin</div>
<div id="m2_li3" class="a t" style="top:696.77px;font-size:20px;line-height:20px;font-weight:normal;color:#555;transform:scaleX(1.0040);left:1709.80px;transform-origin:0 0">Status: Quotation</div>
<div id="m3_ago" class="a t" style="top:760.53px;font-size:16.5px;line-height:16.5px;font-weight:normal;color:#a8acb0;transform:scaleX(0.9607);left:1694.50px;transform-origin:0 0">- 14 minutes ago</div>
<div id="m3_body" class="a t" style="top:791.67px;font-size:20px;line-height:20px;font-weight:normal;color:#555;transform:scaleX(0.9560);left:1650.80px;transform-origin:0 0">Sale Order created</div>
</body></html>
